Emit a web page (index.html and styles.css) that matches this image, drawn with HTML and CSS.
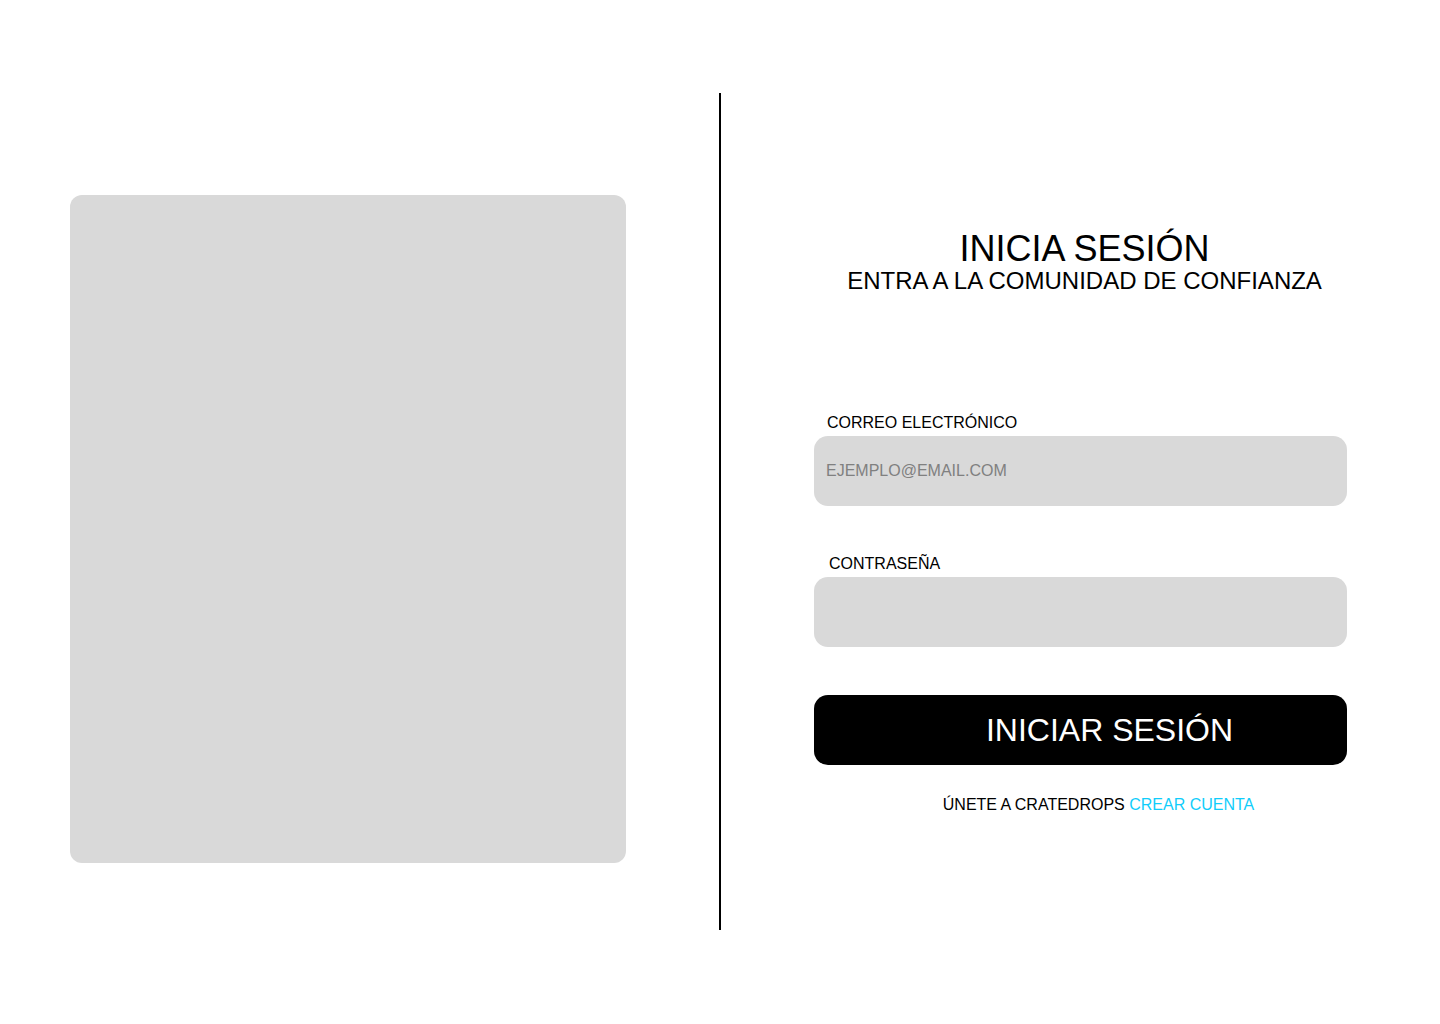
FILE: index.html
```html
<!DOCTYPE html>
<html lang="es">
<head>
<meta charset="utf-8">
<title>Inicia sesión</title>
<link rel="stylesheet" href="styles.css">
</head>
<body>
<main class="page">
  <section class="visual">
    <div class="visual-box"></div>
  </section>
  <div class="divider"></div>
  <section class="auth">
    <header class="auth-head">
      <h1 class="auth-title">INICIA SESIÓN</h1>
      <p class="auth-sub">ENTRA A LA COMUNIDAD DE CONFIANZA</p>
    </header>
    <form class="auth-form">
      <label class="field field-email">
        <span class="field-label">CORREO ELECTRÓNICO</span>
        <input class="field-input" type="email" placeholder="EJEMPLO@EMAIL.COM">
      </label>
      <label class="field field-pass">
        <span class="field-label label-pass">CONTRASEÑA</span>
        <input class="field-input" type="password">
      </label>
      <button class="submit" type="button">INICIAR SESIÓN</button>
      <p class="join">ÚNETE A CRATEDROPS <a class="join-link" href="#">CREAR CUENTA</a></p>
    </form>
  </section>
</main>
</body>
</html>
```
FILE: styles.css
```css
* { box-sizing: border-box; }
html, body { margin: 0; padding: 0; background: #fff; }
body {
  font-family: "Liberation Sans", Arial, sans-serif;
  color: #000;
  width: 1440px;
  height: 1024px;
  overflow: hidden;
}
.page {
  display: flex;
  align-items: flex-start;
  padding-top: 93px;
}
.visual {
  width: 719px;
  padding-left: 70px;
  padding-top: 102px;
}
.visual-box {
  width: 556px;
  height: 668px;
  background: #d9d9d9;
  border-radius: 12px;
}
.divider {
  width: 2px;
  height: 837px;
  background: #000;
}
.auth {
  flex: 1;
  padding-left: 93px;
  padding-top: 138px;
}
.auth-head {
  width: 533px;
  text-align: center;
  padding-left: 8px;
}
.auth-title {
  margin: 0;
  font-weight: 400;
  font-size: 36px;
  line-height: 36px;
}
.auth-sub {
  margin: 0;
  font-size: 24px;
  line-height: 28px;
}
.auth-form {
  width: 533px;
  display: flex;
  flex-direction: column;
  margin-top: 118px;
}
.field { display: flex; flex-direction: column; }
.field-label {
  font-size: 16px;
  line-height: 20px;
  padding-left: 13px;
  margin-bottom: 3px;
}
.label-pass { padding-left: 15px; }
.field-pass { margin-top: 48px; }
.field-input {
  height: 70px;
  border: none;
  background: #d9d9d9;
  border-radius: 14px;
  padding: 0 12px;
  font-family: inherit;
  font-size: 16px;
  color: #000;
  outline: none;
}
.field-input::placeholder { color: #808080; }
.submit {
  margin-top: 48px;
  height: 70px;
  border: none;
  background: #000;
  color: #fff;
  border-radius: 14px;
  font-family: inherit;
  font-size: 32px;
  padding: 0 0 0 58px;
  cursor: pointer;
}
.join {
  margin: 30px 0 0;
  text-align: center;
  font-size: 16px;
  line-height: 20px;
  padding-left: 36px;
}
.join-link { color: #10cdfb; text-decoration: none; }
```
